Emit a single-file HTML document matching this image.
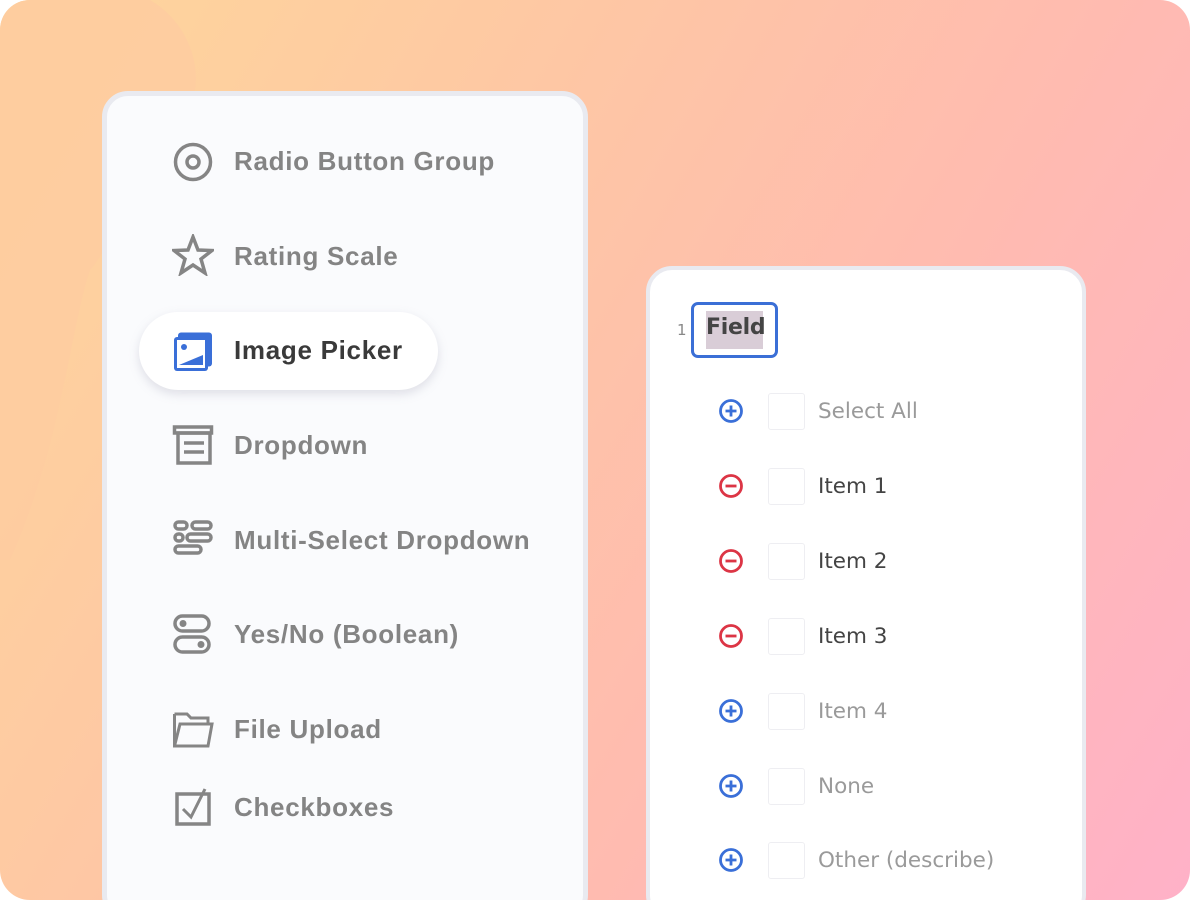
<!DOCTYPE html>
<html><head><meta charset="utf-8"><style>
*{margin:0;padding:0;box-sizing:border-box}
html,body{width:1190px;height:900px;background:#fff;overflow:hidden}
#bg{position:absolute;left:0;top:0;width:1190px;height:900px;border-radius:30px;overflow:hidden;background:linear-gradient(120deg,#fed79b 0%,#fec7a4 35%,#ffbbb0 65%,#ffb1c8 100%)}
.panel{position:absolute;background:#fafbfd;border:5px solid #e9eaf0;border-radius:26px}
.l{position:absolute;font-family:"Liberation Sans",sans-serif;font-weight:bold;font-size:26px;color:#848484;left:234px;line-height:30px;letter-spacing:0.7px}
.ic{position:absolute;left:172px;width:42px;height:42px}
.r{position:absolute;font-family:"DejaVu Sans","Liberation Sans",sans-serif;font-size:21.5px;left:818px;line-height:30px;color:#9a9a9a}
.cb{position:absolute;left:768px;width:37px;height:37px;border:1px solid #eeeef2;border-radius:3px;background:#fff}
.ci{position:absolute;left:718px;width:26px;height:26px}
</style></head><body>
<div id="bg">
<svg width="1190" height="900" style="position:absolute;left:0;top:0"><path d="M0 0 H150 C185 20 200 60 195 90 C150 150 110 250 90 270 C70 330 60 450 10 560 L0 560 Z" fill="#fecca0" opacity="0.9"/></svg>
<div class="panel" style="left:102px;top:91px;width:486px;height:830px"></div>
<div class="panel" style="left:646px;top:266px;width:440px;height:655px;background:#fff;border-width:4px"></div>
</div>

<svg class="ic" style="top:141px" viewBox="0 0 42 42"><circle cx="21" cy="21" r="17.5" fill="none" stroke="#858585" stroke-width="3.5"/><circle cx="21" cy="21" r="6" fill="none" stroke="#858585" stroke-width="3.5"/></svg>
<div class="l" style="top:146px">Radio Button Group</div>

<svg class="ic" style="top:234px" viewBox="0 0 42 42"><path d="M21 3 L26 16 L40 16.5 L29 25 L33 39 L21 31 L9 39 L13 25 L2 16.5 L16 16 Z" fill="none" stroke="#858585" stroke-width="3.5" stroke-linejoin="miter"/></svg>
<div class="l" style="top:241px">Rating Scale</div>

<div style="position:absolute;left:139px;top:312px;width:299px;height:78px;border-radius:39px;background:#fff;box-shadow:0 4px 10px rgba(160,160,180,0.3)"></div>
<svg class="ic" style="top:331px" viewBox="0 0 42 42"><rect x="6" y="1.5" width="34" height="34" rx="3" fill="#3a6fd8"/><rect x="2" y="6" width="34" height="34" rx="3" fill="#3a6fd8"/><rect x="5" y="9" width="28" height="28" fill="#fff"/><circle cx="12" cy="16" r="3" fill="#3a6fd8"/><path d="M7 34 L31 24 L31 34 Z" fill="#3a6fd8"/></svg>
<div class="l" style="top:335px;color:#3a3a3a">Image Picker</div>

<svg class="ic" style="top:425px" viewBox="0 0 42 42"><rect x="2.5" y="2" width="37" height="6" fill="none" stroke="#858585" stroke-width="3.5"/><rect x="6" y="8" width="32" height="30" fill="none" stroke="#858585" stroke-width="3.5"/><path d="M12 18 H32 M12 27 H32" stroke="#858585" stroke-width="3.5"/></svg>
<div class="l" style="top:430px">Dropdown</div>

<svg class="ic" style="top:519px" viewBox="0 0 42 42"><g fill="none" stroke="#858585" stroke-width="3.5"><rect x="3" y="3" width="12" height="7" rx="3.5"/><rect x="20" y="3" width="19" height="7" rx="3.5"/><rect x="3" y="15" width="8" height="7" rx="3.5"/><rect x="15" y="15" width="24" height="7" rx="3.5"/><rect x="3" y="27" width="26" height="7" rx="3.5"/></g></svg>
<div class="l" style="top:525px">Multi-Select Dropdown</div>

<svg class="ic" style="top:613px" viewBox="0 0 42 42"><g fill="none" stroke="#858585" stroke-width="3.5"><rect x="3" y="3" width="34" height="15" rx="7.5"/><rect x="3" y="24" width="34" height="15" rx="7.5"/></g><circle cx="11" cy="10.5" r="3.5" fill="#858585"/><circle cx="29" cy="31.5" r="3.5" fill="#858585"/></svg>
<div class="l" style="top:619px">Yes/No (Boolean)</div>

<svg class="ic" style="top:708px" viewBox="0 0 42 42"><path d="M2.5 6 H15 L19 10 H36 V16 M2.5 6 V38 H36 L40 16 H8 L2.5 38" fill="none" stroke="#858585" stroke-width="3" stroke-linejoin="miter"/></svg>
<div class="l" style="top:714px">File Upload</div>

<svg class="ic" style="top:786px" viewBox="0 0 42 42"><rect x="5" y="8" width="32" height="30" fill="none" stroke="#858585" stroke-width="3.5"/><path d="M11 23 L19 31 L33 3" fill="none" stroke="#858585" stroke-width="3"/></svg>
<div class="l" style="top:792px">Checkboxes</div>

<div style="position:absolute;left:677px;top:321px;font-family:'DejaVu Sans',sans-serif;font-size:15px;color:#888">1</div>
<div style="position:absolute;left:691px;top:302px;width:87px;height:56px;border:3px solid #3b6fd6;border-radius:7px;background:#fff"></div>
<div style="position:absolute;left:706px;top:311px;width:57px;height:38px;background:#d9cdd7"></div>
<div style="position:absolute;left:706px;top:315px;font-family:'DejaVu Sans',sans-serif;font-weight:600;font-size:22px;color:#444;letter-spacing:-0.3px">Field</div>

<svg width="0" height="0" style="position:absolute"><defs>
<g id="plus"><circle cx="13" cy="13" r="10.5" fill="none" stroke="#3a6fd8" stroke-width="2.8"/><path d="M13 7.5 V18.5 M7.5 13 H18.5" stroke="#3a6fd8" stroke-width="2.8"/></g>
<g id="minus"><circle cx="13" cy="13" r="10.5" fill="none" stroke="#dc3545" stroke-width="2.8"/><path d="M7.5 13 H18.5" stroke="#dc3545" stroke-width="2.8"/></g>
</defs></svg>

<svg class="ci" style="top:398px"><use href="#plus"/></svg><div class="cb" style="top:393px"></div><div class="r" style="top:397px">Select All</div>
<svg class="ci" style="top:473px"><use href="#minus"/></svg><div class="cb" style="top:468px"></div><div class="r" style="top:472px;color:#444">Item 1</div>
<svg class="ci" style="top:548px"><use href="#minus"/></svg><div class="cb" style="top:543px"></div><div class="r" style="top:547px;color:#444">Item 2</div>
<svg class="ci" style="top:623px"><use href="#minus"/></svg><div class="cb" style="top:618px"></div><div class="r" style="top:622px;color:#444">Item 3</div>
<svg class="ci" style="top:698px"><use href="#plus"/></svg><div class="cb" style="top:693px"></div><div class="r" style="top:697px">Item 4</div>
<svg class="ci" style="top:773px"><use href="#plus"/></svg><div class="cb" style="top:768px"></div><div class="r" style="top:772px">None</div>
<svg class="ci" style="top:847px"><use href="#plus"/></svg><div class="cb" style="top:842px"></div><div class="r" style="top:846px">Other (describe)</div>
</body></html>
